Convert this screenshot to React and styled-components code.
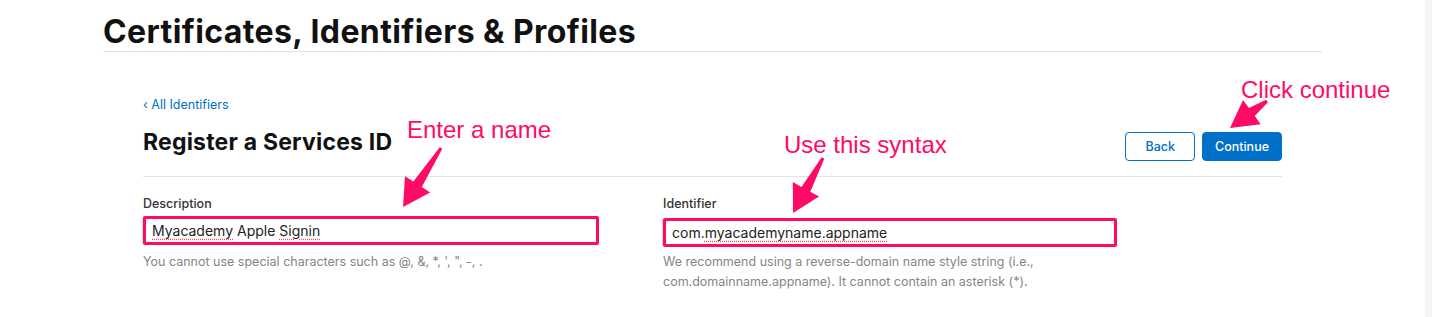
import React from "react";
import styled, { createGlobalStyle } from "styled-components";

const GlobalStyle = createGlobalStyle`
  body {
    margin: 0;
    background: #fff;
    font-family: Inter, "Noto Sans", sans-serif;
    color: #1d1d1f;
  }
`;

const Page = styled.div`
  position: relative;
  height: 317px;
  overflow: hidden;
  border-right: 7px solid #f4f4f4;
  box-sizing: border-box;
  &::after {
    content: "";
    position: absolute;
    top: 0;
    right: -7px;
    width: 4px;
    height: 100%;
    background: #c2c2c2;
  }
`;

const Header = styled.div`
  margin-left: 103px;
  width: 1219px;
  padding-top: 13px;
  border-bottom: 1px solid #e3e3e3;
`;

const Title = styled.h1`
  margin: 0;
  font-size: 32px;
  font-weight: 700;
  letter-spacing: 0.4px;
  line-height: 38px;
  color: #111;
`;

const Content = styled.div`
  margin-left: 143px;
  width: 1139px;
  padding-top: 45px;
`;

const BackLink = styled.a`
  display: block;
  font-size: 12.5px;
  color: #0070c9;
  text-decoration: none;
  line-height: 16px;
`;

const TopRow = styled.div`
  display: flex;
  align-items: flex-start;
  justify-content: space-between;
  padding: 15px 0 15px;
  border-bottom: 1px solid #e3e3e3;
`;

const SubTitle = styled.h2`
  margin: 0;
  font-size: 23px;
  font-weight: 700;
  letter-spacing: 0.2px;
  line-height: 28px;
  color: #111;
`;

const Buttons = styled.div`
  display: flex;
  gap: 7px;
  margin-top: 4px;
`;

const Button = styled.button`
  height: 29px;
  padding: 0 ${(p) => (p.$primary ? "12px" : "19px")};
  border-radius: 4px;
  border: 1px solid #0070c9;
  background: ${(p) => (p.$primary ? "#0070c9" : "#fff")};
  color: ${(p) => (p.$primary ? "#fff" : "#0070c9")};
  font-family: Inter, sans-serif;
  font-size: 12.5px;
  font-weight: 500;
`;

const Fields = styled.div`
  display: grid;
  grid-template-columns: 456px 454px;
  column-gap: 64px;
  padding-top: 19px;
`;

const Field = styled.div`
  display: flex;
  flex-direction: column;
`;

const Label = styled.label`
  font-size: 12.5px;
  font-weight: 500;
  color: #333;
  line-height: 16px;
  margin-bottom: ${(p) => p.$gap || 4}px;
`;

const Input = styled.div`
  height: 23px;
  border: 3px solid #ff0a66;
  border-radius: 2px;
  padding-left: 6px;
  display: flex;
  align-items: center;
  font-size: 14px;
  color: #222;
  box-shadow: -1px 0 0 #d6d6d6;
`;

const Typo = styled.span`
  text-decoration: underline dotted #ff4d4d;
  text-underline-offset: 3px;
`;

const Help = styled.p`
  margin: ${(p) => p.$gap || 7}px 0 0;
  font-size: 12.5px;
  line-height: 20px;
  color: #858585;
`;

const Note = styled.div`
  position: absolute;
  left: ${(p) => p.$x}px;
  top: ${(p) => p.$y}px;
  font-family: "Liberation Sans", Arial, sans-serif;
  font-size: 24px;
  line-height: 24px;
  color: #ff0a66;
  white-space: nowrap;
`;

const Overlay = styled.svg`
  position: absolute;
  left: 0;
  top: 0;
  pointer-events: none;
`;

function arrowPoints(tx, ty, hx, hy) {
  const dx = hx - tx;
  const dy = hy - ty;
  const len = Math.hypot(dx, dy);
  const ux = dx / len;
  const uy = dy / len;
  const nx = -uy;
  const ny = ux;
  const headLen = 27;
  const headW = 15;
  const tailW = 1.5;
  const neckW = 5;
  const bx = hx - ux * headLen;
  const by = hy - uy * headLen;
  const pts = [
    [tx + nx * tailW, ty + ny * tailW],
    [bx + nx * neckW, by + ny * neckW],
    [bx + nx * headW, by + ny * headW],
    [hx, hy],
    [bx - nx * headW, by - ny * headW],
    [bx - nx * neckW, by - ny * neckW],
    [tx - nx * tailW, ty - ny * tailW],
  ];
  return pts.map((p) => p.map((v) => v.toFixed(1)).join(",")).join(" ");
}

const arrows = [
  [441, 148, 403, 207],
  [823, 158, 793, 213],
  [1267, 101, 1230, 128],
];

export default function App() {
  return (
    <>
      <GlobalStyle />
      <Page>
        <Header>
          <Title>Certificates, Identifiers &amp; Profiles</Title>
        </Header>
        <Content>
          <BackLink href="#">‹ All Identifiers</BackLink>
          <TopRow>
            <SubTitle>Register a Services ID</SubTitle>
            <Buttons>
              <Button>Back</Button>
              <Button $primary>Continue</Button>
            </Buttons>
          </TopRow>
          <Fields>
            <Field>
              <Label>Description</Label>
              <Input>
                <span>
                  <Typo>Myacademy</Typo> Apple <Typo>Signin</Typo>
                </span>
              </Input>
              <Help>You cannot use special characters such as @, &amp;, *, ', ", -, .</Help>
            </Field>
            <Field>
              <Label $gap={6}>Identifier</Label>
              <Input>
                <span>
                  com.<Typo>myacademyname.appname</Typo>
                </span>
              </Input>
              <Help $gap={5}>
                We recommend using a reverse-domain name style string (i.e.,
                com.domainname.appname). It cannot contain an asterisk (*).
              </Help>
            </Field>
          </Fields>
        </Content>

        <Note $x={407} $y={118}>Enter a name</Note>
        <Note $x={784} $y={133}>Use this syntax</Note>
        <Note $x={1241} $y={78}>Click continue</Note>
        <Overlay width="1432" height="317">
          {arrows.map((a, i) => (
            <polygon key={i} points={arrowPoints(...a)} fill="#ff0a66" />
          ))}
        </Overlay>
      </Page>
    </>
  );
}
